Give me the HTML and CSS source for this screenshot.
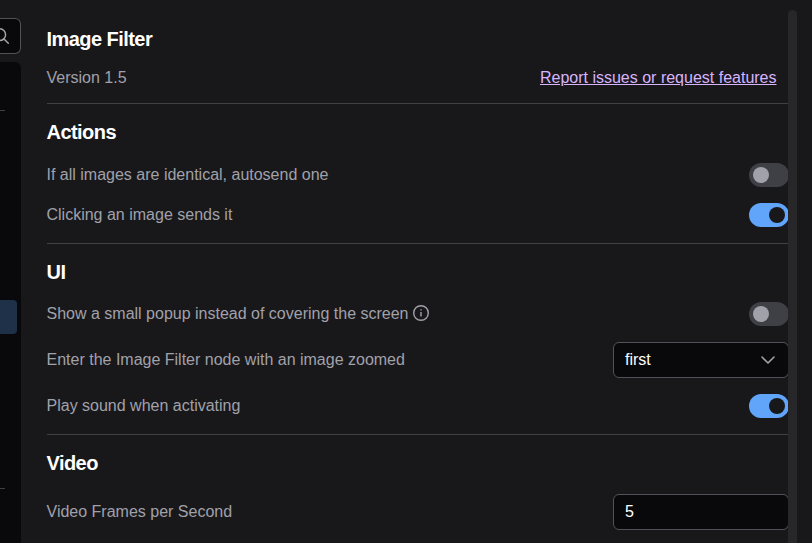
FILE: index.html
```html
<!DOCTYPE html>
<html lang="en">
<head>
<meta charset="utf-8">
<title>Image Filter</title>
<link rel="stylesheet" href="styles.css">
</head>
<body>
<div class="dialog">
  <aside class="sidebar">
    <div class="search">
      <svg class="search-icon" width="16" height="16" viewBox="0 0 16 16" fill="none" stroke="#a1a1aa" stroke-width="1.5" stroke-linecap="round"><circle cx="6.7" cy="6.7" r="5.9"/><path d="M11 11l4.3 4.3"/></svg>
    </div>
    <nav class="tree">
      <div class="tree-line"></div>
      <div class="tree-selected"></div>
      <div class="tree-line"></div>
    </nav>
  </aside>
  <main class="panel">
    <div class="content">
      <h2>Image Filter</h2>
      <div class="row about"><span>Version 1.5</span><a class="report">Report issues or request features</a></div>
      <hr>
      <h2>Actions</h2>
      <div class="row spaced"><span>If all images are identical, autosend one</span><span class="toggle"></span></div>
      <div class="row"><span>Clicking an image sends it</span><span class="toggle on"></span></div>
      <hr>
      <h2>UI</h2>
      <div class="row"><span class="label">Show a small popup instead of covering the screen
        <svg width="16" height="16" viewBox="0 0 16 16" fill="none" stroke="#a1a1aa" stroke-width="1.4"><circle cx="8" cy="8" r="7.3"/><path d="M8 7v4.6M8 4.2v1.4"/></svg></span><span class="toggle"></span></div>
      <div class="row field"><span>Enter the Image Filter node with an image zoomed</span>
        <div class="control"><span>first</span><svg width="14" height="8" viewBox="0 0 14 8" fill="none" stroke="#a1a1aa" stroke-width="1.6" stroke-linecap="round" stroke-linejoin="round"><path d="M1 1l6 6 6-6"/></svg></div></div>
      <div class="row"><span>Play sound when activating</span><span class="toggle on"></span></div>
      <hr>
      <h2>Video</h2>
      <div class="row field spaced"><span>Video Frames per Second</span><div class="control"><span>5</span></div></div>
    </div>
  </main>
  <div class="scrollbar"></div>
</div>
</body>
</html>
```
FILE: styles.css
```css
* { box-sizing: border-box; }
body {
  margin: 0;
  overflow: hidden;
  background: #18181a;
  color: #a1a1aa;
  font: 16px/24px "Liberation Sans", Arial, sans-serif;
}
.dialog { display: flex; height: 543px; }
.sidebar {
  width: 21px;
  padding-top: 18px;
  display: flex;
  flex-direction: column;
  gap: 8px;
}
.search {
  height: 36px;
  background: #09090b;
  border: 1px solid #52525b;
  border-left: 0;
  border-radius: 0 6px 6px 0;
  overflow: hidden;
  display: flex;
  align-items: center;
}
.search-icon { flex: none; margin-left: -7px; }
.tree {
  flex: 1;
  background: #09090b;
  border-radius: 0 6px 0 0;
  padding-top: 48px;
  display: flex;
  flex-direction: column;
}
.tree-line { width: 5px; height: 1px; background: #3f3f46; }
.tree-selected {
  width: 17px;
  height: 34px;
  margin: 189px 0 154px;
  border-radius: 0 4px 4px 0;
  background: #1f3148;
}
.panel { width: 767px; overflow: hidden; padding: 25px 0 0 25.5px; }
.content { width: 742.5px; }
h2 {
  margin: 0;
  color: #fff;
  font-size: 20px;
  letter-spacing: -0.55px;
  line-height: 28px;
  font-weight: 700;
}
hr {
  height: 1px;
  margin: 16px 0 14px;
  border: 0;
  background: #3f3f46;
}
.row {
  height: 24px;
  margin-top: 16px;
  display: flex;
  align-items: center;
  justify-content: space-between;
}
.row.spaced { margin-top: 17px; }
.row.about { margin-top: 13px; padding-right: 12.5px; }
.row.about + hr { margin-top: 13px; }
.row.field { height: 36px; }
.report { color: #d8b4fe; text-decoration: underline; }
.label { display: flex; align-items: center; gap: 4px; }
.label svg { position: relative; top: -1px; }
.toggle {
  width: 40px;
  height: 24px;
  padding: 4px;
  border-radius: 12px;
  background: #3f3f46;
  display: flex;
}
.toggle::before {
  content: "";
  width: 16px;
  height: 16px;
  border-radius: 50%;
  background: #a1a1aa;
}
.toggle.on { background: #60a5fa; justify-content: flex-end; }
.toggle.on::before { background: #18181b; }
.control {
  width: 176px;
  height: 36px;
  padding: 0 13px 0 11px;
  border: 1px solid #52525b;
  border-radius: 6px;
  background: #09090b;
  color: #fff;
  display: flex;
  align-items: center;
  justify-content: space-between;
}
.scrollbar {
  width: 9px;
  margin-top: 10px;
  border-radius: 5px 5px 0 0;
  background: #27272a;
}
```
